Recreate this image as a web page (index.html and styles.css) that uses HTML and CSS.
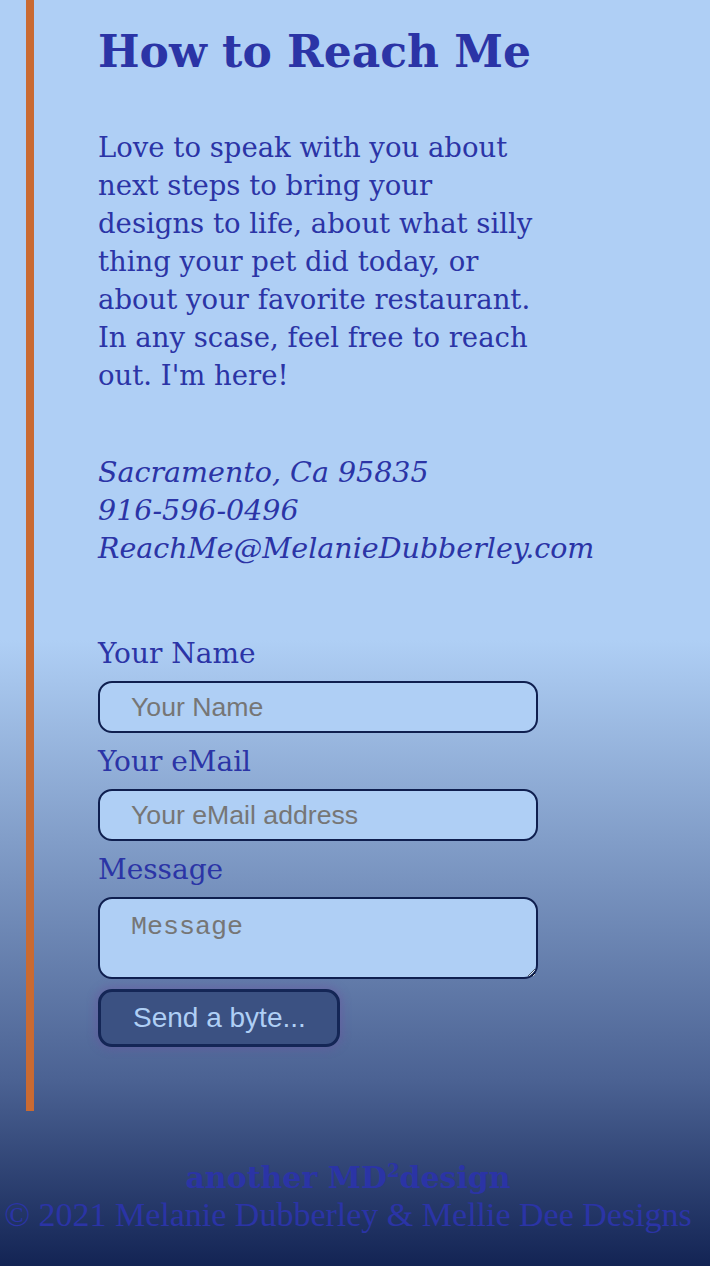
FILE: index.html
```html
<!DOCTYPE html>
<html lang="en">
<head>
<meta charset="utf-8">
<title>How to Reach Me</title>
<link rel="stylesheet" href="styles.css">
</head>
<body>
<div class="page">
  <main class="content">
    <h1 class="title">How to Reach Me</h1>
    <p class="intro">Love to speak with you about<br>next steps to bring your<br>designs to life, about what silly<br>thing your pet did today, or<br>about your favorite restaurant.<br>In any scase, feel free to reach<br>out. I'm here!</p>
    <address class="contact">
      <span>Sacramento, Ca 95835</span>
      <span>916-596-0496</span>
      <span>ReachMe@MelanieDubberley.com</span>
    </address>
    <form class="form">
      <label class="label" for="name">Your Name</label>
      <input class="field" id="name" type="text" placeholder="Your Name">
      <label class="label" for="email">Your eMail</label>
      <input class="field" id="email" type="email" placeholder="Your eMail address">
      <label class="label" for="msg">Message</label>
      <textarea class="field area" id="msg" placeholder="Message"></textarea>
      <button class="send" type="button">Send a byte...</button>
    </form>
  </main>
  <footer class="footer">
    <div class="brand">another MD<sup>2</sup>design</div>
    <div class="copy">© 2021 Melanie Dubberley &amp; Mellie Dee Designs</div>
  </footer>
</div>
</body>
</html>
```
FILE: styles.css
```css
html, body {
  margin: 0;
  padding: 0;
}
body {
  width: 710px;
  min-height: 1266px;
  background: linear-gradient(to bottom, #afcff5 0, #afcff5 640px, #4b6293 1080px, #132454 1266px);
  font-family: "DejaVu Serif", Georgia, serif;
  color: #2b34a6;
}
.page {
  display: flex;
  flex-direction: column;
  min-height: 1266px;
}
.content {
  margin-left: 26px;
  border-left: 8px solid #c96a32;
  padding-left: 64px;
  height: 1111px;
  box-sizing: border-box;
  padding-top: 1px;
}
.title {
  margin: 24px 0 0;
  font-size: 44px;
  line-height: 54px;
  font-weight: bold;
}
.intro {
  margin: 49px 0 0;
  font-size: 27.5px;
  line-height: 38px;
  white-space: nowrap;
}
.contact {
  margin-top: 60px;
  display: flex;
  flex-direction: column;
  font-size: 28.5px;
  line-height: 38px;
  font-style: italic;
}
.form {
  margin-top: 57px;
  display: flex;
  flex-direction: column;
  align-items: flex-start;
  width: 440px;
}
.label {
  font-size: 28px;
  line-height: 36px;
  margin: 11px 0 9px;
}
.field {
  box-sizing: border-box;
  width: 440px;
  height: 52px;
  border: 2px solid #0f1f4f;
  border-radius: 14px;
  background: #afcff5;
  padding: 0 0 0 31px;
  font-family: "Liberation Sans", Arial, sans-serif;
  font-size: 26.67px;
  color: #333;
  margin: 0;
}
.field::placeholder {
  color: #767676;
}
.area {
  height: 82px;
  padding-top: 12px;
  font-family: "Liberation Mono", "Courier New", monospace;
  font-size: 26.67px;
  line-height: 32px;
  resize: vertical;
  margin-bottom: 10px;
}
.send {
  width: 242px;
  height: 58px;
  box-sizing: border-box;
  border: 3px solid #142656;
  border-radius: 14px;
  background: #3b5182;
  color: #afcff5;
  font-family: "Liberation Sans", Arial, sans-serif;
  font-size: 28px;
  text-align: left;
  padding: 0 0 0 32px;
  box-shadow: 0 0 10px 2px rgba(110, 80, 160, 0.45);
}
.footer {
  text-align: center;
  color: #2b34a6;
  padding: 48px 14px 0 0;
  font-family: "Liberation Serif", Georgia, serif;
}
.brand {
  font-family: "DejaVu Serif", Georgia, serif;
  font-size: 30px;
  line-height: 38px;
  font-weight: bold;
}
.brand sup {
  font-size: 18px;
  line-height: 0;
}
.copy {
  font-size: 34px;
  line-height: 36px;
  white-space: nowrap;
}
```
